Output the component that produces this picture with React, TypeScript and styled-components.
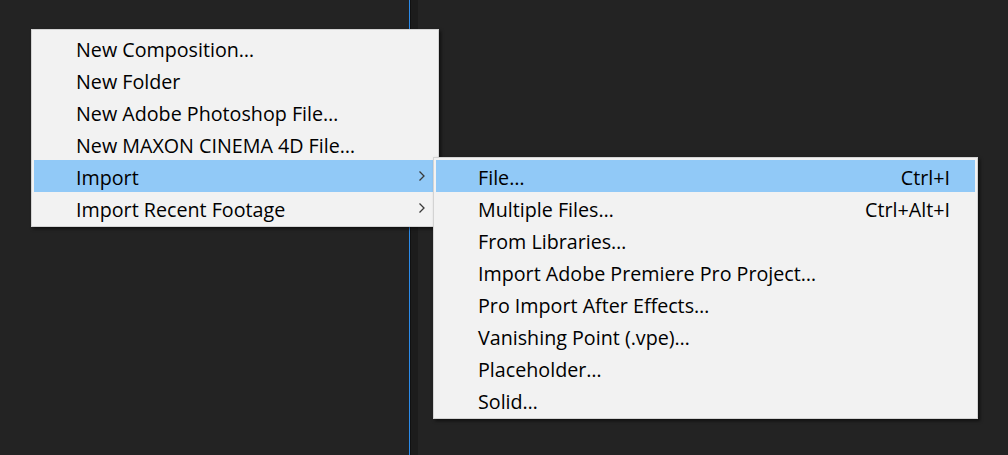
import React from "react";
import styled, { createGlobalStyle } from "styled-components";

const Global = createGlobalStyle`
  html, body { margin: 0; padding: 0; }
  body { background: #232323; width: 1008px; height: 455px; overflow: hidden; font-family: "Open Sans", "Noto Sans", sans-serif; }
  #root { width: 1008px; height: 455px; }
`;

const Workspace = styled.div`
  position: relative;
  width: 1008px;
  height: 455px;
  display: flex;
  background: #232323;
`;

const Panel = styled.div<{ $w?: number }>`
  ${(p) => (p.$w ? `width: ${p.$w}px;` : "flex: 1;")}
  height: 100%;
  background: #232323;
`;

const Divider = styled.div`
  width: 9px;
  height: 100%;
  display: flex;
  background: #1c1c1c;
  &::before {
    content: "";
    width: 1px;
    background: #2b8bea;
  }
  &::after {
    content: "";
    width: 1px;
    background: #111;
  }
`;

const Menu = styled.div<{ $x: number; $y: number; $w: number }>`
  position: absolute;
  left: ${(p) => p.$x}px;
  top: ${(p) => p.$y}px;
  width: ${(p) => p.$w}px;
  box-sizing: border-box;
  background: #f2f2f2;
  border: 1px solid #d3d3d3;
  padding: 2px;
  box-shadow: 2px 2px 3px rgba(0, 0, 0, 0.55);
  font-family: "Open Sans", "Noto Sans", sans-serif;
  font-size: 19.7px;
  color: #000;
`;

const Row = styled.div<{ $active?: boolean }>`
  height: 32px;
  box-sizing: border-box;
  padding-top: 2px;
  display: flex;
  align-items: center;
  padding-left: 42px;
  padding-right: 25px;
  background: ${(p) => (p.$active ? "#91c9f7" : "transparent")};
  white-space: nowrap;
`;

const Label = styled.span`
  flex: 1;
`;

const Shortcut = styled.span`
  text-align: right;
`;

const Chevron = styled.svg`
  width: 8px;
  height: 12px;
  margin-top: -2px;
  margin-right: -15px;
`;

const Arrow = () => (
  <Chevron viewBox="0 0 8 12">
    <path d="M1.5 1.5 L6 6 L1.5 10.5" fill="none" stroke="#3a3a3a" strokeWidth="1.3" />
  </Chevron>
);

const mainItems = [
  { label: "New Composition…" },
  { label: "New Folder" },
  { label: "New Adobe Photoshop File…" },
  { label: "New MAXON CINEMA 4D File…" },
  { label: "Import", sub: true, active: true },
  { label: "Import Recent Footage", sub: true },
];

const subItems = [
  { label: "File…", key: "Ctrl+I", active: true },
  { label: "Multiple Files…", key: "Ctrl+Alt+I" },
  { label: "From Libraries…" },
  { label: "Import Adobe Premiere Pro Project…" },
  { label: "Pro Import After Effects…" },
  { label: "Vanishing Point (.vpe)…" },
  { label: "Placeholder…" },
  { label: "Solid…" },
];

export default function App() {
  return (
    <>
      <Global />
      <Workspace>
        <Panel $w={409} />
        <Divider />
        <Panel />
        <Menu $x={31} $y={29} $w={408}>
          {mainItems.map((it) => (
            <Row key={it.label} $active={it.active}>
              <Label>{it.label}</Label>
              {it.sub && <Arrow />}
            </Row>
          ))}
        </Menu>
        <Menu $x={433} $y={157} $w={545}>
          {subItems.map((it) => (
            <Row key={it.label} $active={it.active}>
              <Label>{it.label}</Label>
              {it.key && <Shortcut>{it.key}</Shortcut>}
            </Row>
          ))}
        </Menu>
      </Workspace>
    </>
  );
}
